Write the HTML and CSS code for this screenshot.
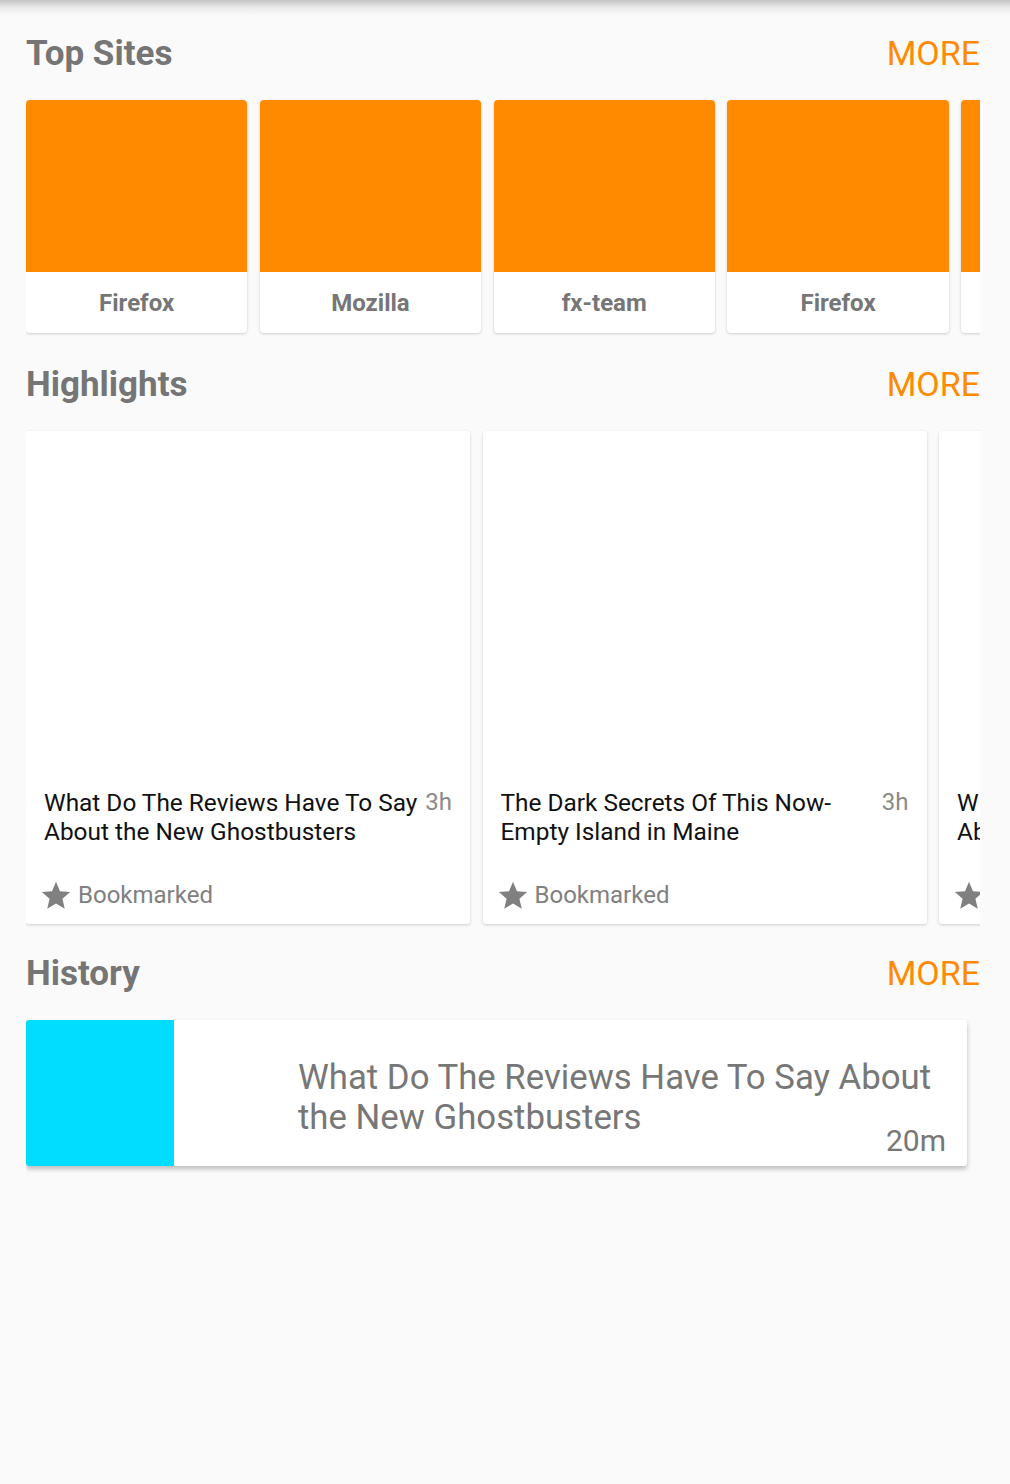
FILE: index.html
```html
<!DOCTYPE html>
<html>
<head>
<meta charset="utf-8">
<link rel="stylesheet" href="styles.css">
</head>
<body>
<div class="appbar-shadow"></div>
<main class="page">
  <section class="section section-top">
    <header class="section-head">
      <h2 class="section-title">Top Sites</h2>
      <span class="more">MORE</span>
    </header>
    <div class="row tiles">
      <div class="tile"><div class="tile-img"></div><div class="tile-label">Firefox</div></div>
      <div class="tile"><div class="tile-img"></div><div class="tile-label">Mozilla</div></div>
      <div class="tile"><div class="tile-img"></div><div class="tile-label">fx-team</div></div>
      <div class="tile"><div class="tile-img"></div><div class="tile-label">Firefox</div></div>
      <div class="tile"><div class="tile-img"></div><div class="tile-label">Mozilla</div></div>
    </div>
  </section>

  <section class="section section-highlights">
    <header class="section-head">
      <h2 class="section-title">Highlights</h2>
      <span class="more">MORE</span>
    </header>
    <div class="row highlights">
      <article class="hl-card">
        <div class="hl-image"></div>
        <div class="hl-body">
          <div class="hl-top">
            <div class="hl-title">What Do The Reviews Have To Say About the New Ghostbusters</div>
            <div class="hl-time">3h</div>
          </div>
          <div class="hl-meta">
            <svg class="star" viewBox="0 0 24 24"><path d="M12 17.27L18.18 21l-1.64-7.03L22 9.24l-7.19-.61L12 2 9.19 8.63 2 9.24l5.46 4.73L5.82 21z"/></svg>
            <span>Bookmarked</span>
          </div>
        </div>
      </article>
      <article class="hl-card">
        <div class="hl-image"></div>
        <div class="hl-body">
          <div class="hl-top">
            <div class="hl-title">The Dark Secrets Of This Now-Empty Island in Maine</div>
            <div class="hl-time">3h</div>
          </div>
          <div class="hl-meta">
            <svg class="star" viewBox="0 0 24 24"><path d="M12 17.27L18.18 21l-1.64-7.03L22 9.24l-7.19-.61L12 2 9.19 8.63 2 9.24l5.46 4.73L5.82 21z"/></svg>
            <span>Bookmarked</span>
          </div>
        </div>
      </article>
      <article class="hl-card">
        <div class="hl-image"></div>
        <div class="hl-body">
          <div class="hl-top">
            <div class="hl-title">What Do The Reviews Have To Say About the New Ghostbusters</div>
            <div class="hl-time">3h</div>
          </div>
          <div class="hl-meta">
            <svg class="star" viewBox="0 0 24 24"><path d="M12 17.27L18.18 21l-1.64-7.03L22 9.24l-7.19-.61L12 2 9.19 8.63 2 9.24l5.46 4.73L5.82 21z"/></svg>
            <span>Bookmarked</span>
          </div>
        </div>
      </article>
    </div>
  </section>

  <section class="section section-history">
    <header class="section-head">
      <h2 class="section-title">History</h2>
      <span class="more">MORE</span>
    </header>
    <div class="history-card">
      <div class="history-thumb"></div>
      <div class="history-body">
        <div class="history-title">What Do The Reviews Have To Say About the New Ghostbusters</div>
        <div class="history-time">20m</div>
      </div>
    </div>
  </section>
</main>
</body>
</html>
```

FILE: styles.css
```css
* { box-sizing: border-box; }

html, body {
  margin: 0;
  padding: 0;
  background: #fafafa;
  font-family: Roboto, "Noto Sans", "Liberation Sans", sans-serif;
}

.appbar-shadow {
  height: 16px;
  background: linear-gradient(to bottom, rgba(0,0,0,0.22), rgba(0,0,0,0.06) 50%, rgba(0,0,0,0));
}

.page {
  margin-left: 26px;
  width: 954px;
  padding-top: 17px;
  padding-bottom: 24px;
  overflow: hidden;
}

.section-top { margin-bottom: 31px; }
.section-highlights { margin-bottom: 29px; }

.section-head {
  display: flex;
  justify-content: space-between;
  align-items: baseline;
  height: 40px;
  margin-bottom: 27px;
}

.section-title {
  margin: 0;
  font-size: 35px;
  line-height: 40px;
  font-weight: 700;
  color: #757575;
}

.more {
  font-size: 34px;
  line-height: 40px;
  color: #ff8a00;
}

.row {
  display: flex;
  overflow: visible;
}

.tiles { gap: 12.5px; }

.tile {
  flex: 0 0 221.3px;
  height: 233px;
  border-radius: 4px;
  background: #fff;
  box-shadow: 0 1px 3px rgba(0,0,0,0.18);
  overflow: hidden;
  display: flex;
  flex-direction: column;
}

.tile-img {
  height: 172px;
  background: #ff8a00;
}

.tile-label {
  flex: 1;
  display: flex;
  align-items: center;
  justify-content: center;
  padding-top: 1px;
  font-size: 24px;
  font-weight: 700;
  color: #767676;
}

.highlights { gap: 12.5px; }

.hl-card {
  flex: 0 0 444px;
  background: #fff;
  border-radius: 3px;
  box-shadow: 0 1px 3px rgba(0,0,0,0.18);
}

.hl-image { height: 337px; }

.hl-body { padding: 20px 18px 14px 18px; }

.hl-top {
  display: flex;
  align-items: flex-start;
  gap: 5px;
  height: 58px;
}

.hl-title {
  flex: 1;
  font-size: 24.4px;
  line-height: 29px;
  color: #111;
}

.hl-time {
  font-size: 24px;
  line-height: 29px;
  color: #8a8a8a;
}

.hl-meta {
  margin-top: 35px;
  display: flex;
  align-items: center;
  height: 29px;
  font-size: 24px;
  line-height: 29px;
  color: #808080;
}

.star {
  width: 34px;
  height: 34px;
  margin-left: -5px;
  margin-right: 5px;
  fill: #808080;
  flex: none;
}

.history-card {
  display: flex;
  width: 941px;
  height: 146px;
  background: #fff;
  border-radius: 3px;
  overflow: hidden;
  box-shadow: 0 3px 5px rgba(0,0,0,0.25);
}

.history-thumb {
  flex: 0 0 148px;
  background: #00ddff;
}

.history-body {
  flex: 1;
  display: flex;
  flex-direction: column;
  padding: 37px 21px 0 124px;
}

.history-title {
  font-size: 34.75px;
  line-height: 40px;
  color: #777;
}

.history-time {
  align-self: flex-end;
  margin-top: -11px;
  font-size: 30px;
  line-height: 30px;
  color: #777;
}
```
